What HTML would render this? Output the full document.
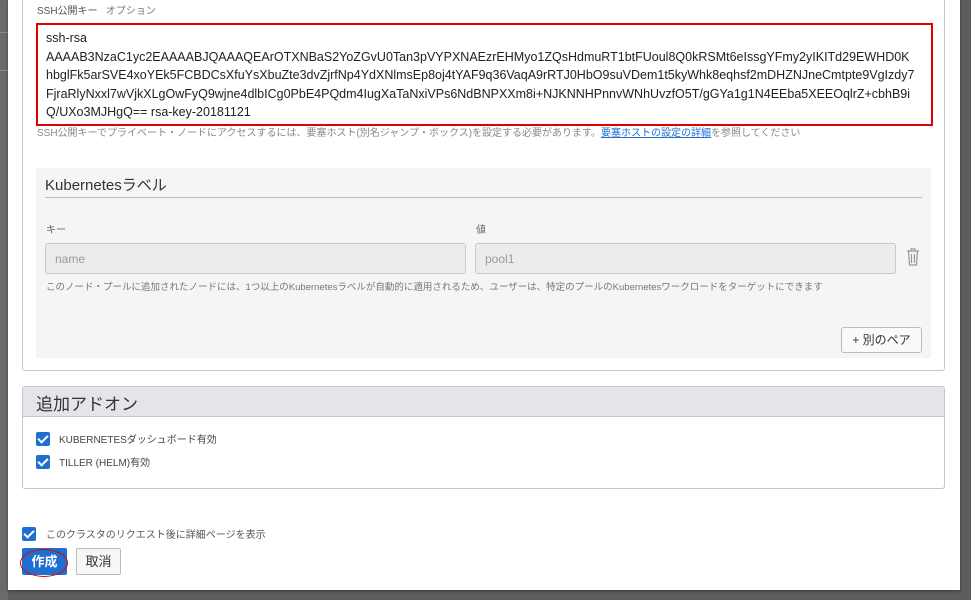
<!DOCTYPE html>
<html><head><meta charset="utf-8"><style>
*{box-sizing:border-box;margin:0;padding:0}
body{width:971px;height:600px;overflow:hidden;background:#5c5c5c;font-family:"Liberation Sans","Noto Sans CJK JP",sans-serif;position:relative}
.abs{position:absolute}
.modal{left:8px;top:0;width:952px;height:590px;background:#fff;box-shadow:0 1px 3px rgba(0,0,0,.4)}
.card{border:1px solid #c3c7ce;border-radius:3px}
.lbl{font-size:10px;color:#555;line-height:12px}
.cb{width:14px;height:14px;background:#1f6fd0;border-radius:2px}
.cb::after{content:"";position:absolute;left:4px;top:1px;width:4px;height:8px;border:solid #fff;border-width:0 2px 2px 0;transform:rotate(45deg)}
</style></head><body>
<div class="abs" style="left:0;top:0;width:8px;height:600px;background:#6a6a6a"></div>
<div class="abs" style="left:0;top:32px;width:8px;height:1px;background:#888"></div>
<div class="abs" style="left:0;top:70px;width:8px;height:1px;background:#888"></div>
<div class="abs modal"></div>
<div class="abs card" style="left:22px;top:-5px;width:923px;height:376px;border-top:none"></div>
<div class="abs lbl" style="left:37px;top:6px">SSH公開キー&nbsp;&nbsp;&nbsp;<span style="color:#777">オプション</span></div>
<div class="abs" style="left:36px;top:23px;width:897px;height:103px;border:2px solid #e00000;padding:4px 8px;font-size:12.5px;line-height:18.5px;color:#222;word-break:break-all;overflow:hidden">ssh-rsa<br>AAAAB3NzaC1yc2EAAAABJQAAAQEArOTXNBaS2YoZGvU0Tan3pVYPXNAEzrEHMyo1ZQsHdmuRT1btFUoul8Q0kRSMt6eIssgYFmy2yIKITd29EWHD0K<br>hbglFk5arSVE4xoYEk5FCBDCsXfuYsXbuZte3dvZjrfNp4YdXNlmsEp8oj4tYAF9q36VaqA9rRTJ0HbO9suVDem1t5kyWhk8eqhsf2mDHZNJneCmtpte9VgIzdy7<br>FjraRlyNxxl7wVjkXLgOwFyQ9wjne4dlbICg0PbE4PQdm4IugXaTaNxiVPs6NdBNPXXm8i+NJKNNHPnnvWNhUvzfO5T/gGYa1g1N4EEba5XEEOqlrZ+cbhB9i<br>Q/UXo3MJHgQ== rsa-key-20181121</div>
<div class="abs lbl" style="left:37px;top:128px;color:#888">SSH公開キーでプライベート・ノードにアクセスするには、要塞ホスト(別名ジャンプ・ボックス)を設定する必要があります。<span style="color:#1f6fd0;text-decoration:underline">要塞ホストの設定の詳細</span>を参照してください</div>
<div class="abs" style="left:36px;top:168px;width:895px;height:190px;background:#f5f5f5"></div>
<div class="abs" style="left:45px;top:174px;font-size:15px;color:#333">Kubernetesラベル</div>
<div class="abs" style="left:45px;top:197px;width:877px;height:1px;background:#bbb"></div>
<div class="abs lbl" style="left:46px;top:225px;color:#666">キー</div>
<div class="abs lbl" style="left:476px;top:225px;color:#666">値</div>
<div class="abs" style="left:45px;top:243px;width:421px;height:31px;border:1px solid #c8c8c8;border-radius:3px;background:#ececec;font-size:12px;color:#999;padding:8px 9px">name</div>
<div class="abs" style="left:475px;top:243px;width:421px;height:31px;border:1px solid #c8c8c8;border-radius:3px;background:#ececec;font-size:12px;color:#999;padding:8px 9px">pool1</div>
<svg class="abs" style="left:905px;top:247px" width="16" height="20" viewBox="0 0 16 20" fill="none" stroke="#999" stroke-width="1.2"><path d="M2 4h12M6 4V2h4v2M3.5 4l1 14h7l1-14M6.5 7v9M9.5 7v9"/></svg>
<div class="abs" style="left:46px;top:282px;font-size:9.5px;line-height:11px;color:#777">このノード・プールに追加されたノードには、1つ以上のKubernetesラベルが自動的に適用されるため、ユーザーは、特定のプールのKubernetesワークロードをターゲットにできます</div>
<div class="abs" style="left:841px;top:327px;width:81px;height:26px;border:1px solid #bbb;border-radius:3px;background:#fafafa;font-size:12px;color:#333;text-align:center;line-height:24px">+ 別のペア</div>
<div class="abs card" style="left:22px;top:386px;width:923px;height:103px;overflow:hidden"><div style="height:30px;background:#e3e5e8;border-bottom:1px solid #c3c7ce;font-size:17px;color:#333;padding:3px 13px">追加アドオン</div></div>
<div class="abs cb" style="left:36px;top:432px"></div>
<div class="abs lbl" style="left:59px;top:435px;color:#444">KUBERNETESダッシュボード有効</div>
<div class="abs cb" style="left:36px;top:455px"></div>
<div class="abs lbl" style="left:59px;top:458px;color:#444">TILLER (HELM)有効</div>
<div class="abs cb" style="left:22px;top:527px"></div>
<div class="abs lbl" style="left:46px;top:530px;color:#555">このクラスタのリクエスト後に詳細ページを表示</div>
<div class="abs" style="left:22px;top:548px;width:45px;height:27px;background:#1f6fd0;border-radius:2px;color:#fff;font-size:13px;font-weight:bold;text-align:center;line-height:27px">作成</div>
<div class="abs" style="left:20px;top:549px;width:48px;height:28px;border:1.5px solid #e00000;border-radius:50%"></div>
<div class="abs" style="left:76px;top:548px;width:45px;height:27px;border:1px solid #bbb;border-radius:2px;background:#f7f7f7;color:#333;font-size:13px;text-align:center;line-height:25px">取消</div>
</body></html>
